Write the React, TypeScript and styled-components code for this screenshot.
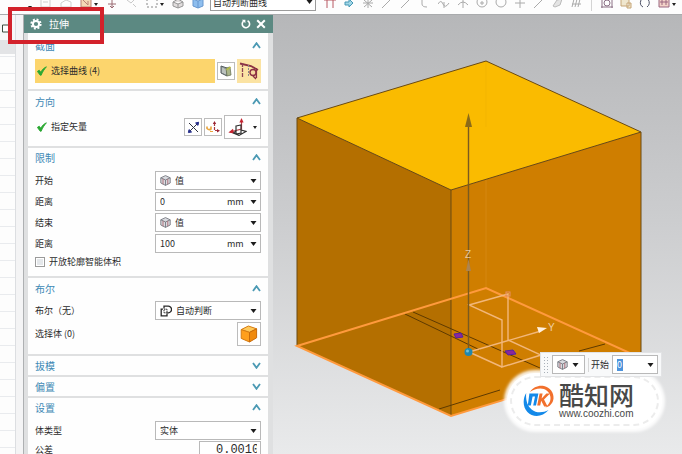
import React, { useState } from "react";
import styled, { createGlobalStyle } from "styled-components";

const GlobalStyle = createGlobalStyle`
  *, *::before, *::after { box-sizing: border-box; }
  body {
    margin: 0;
    font-family: "Noto Sans CJK SC", "Noto Sans", sans-serif;
    font-size: 9px;
    line-height: 14px;
    color: #2b2b2b;
    background: #fff;
  }
  button, input, select { font: inherit; color: inherit; }
`;

const Window = styled.div`
  position: relative;
  display: flex;
  flex-direction: column;
  height: 100vh;
  overflow: hidden;
`;

/* ---------- toolbar ---------- */

const Toolbar = styled.header`
  display: flex;
  align-items: flex-end;
  height: 15px;
  flex: none;
  padding: 0 4px 3px 28px;
  background: #fdfdfd;
  border-bottom: 1px solid #a9abad;
`;

const ToolStrip = styled.div<{ $gap: number }>`
  display: flex;
  align-items: flex-end;
  gap: ${(p) => p.$gap}px;
  height: 100%;
  padding-bottom: 2px;
`;

const ToolButton = styled.button`
  display: flex;
  align-items: center;
  gap: 2px;
  padding: 0;
  border: 0;
  background: none;
  svg { display: block; }
`;

const RuleBox = styled.div`
  display: flex;
  align-items: flex-end;
  width: 106px;
  height: 17px;
  margin: 0 8px 0 6px;
  padding: 0 2px;
  border: 1px solid #9b9b9b;
  flex: none;
  background: #fff;
`;

const Divider = styled.span`
  width: 1px;
  height: 12px;
  margin: 0 9px 0 8px;
  background: #d4d4d4;
`;

/* ---------- body ---------- */

const Body = styled.main`
  display: flex;
  flex: 1;
  min-height: 0;
`;

const Navigator = styled.aside`
  display: flex;
  flex: none;
  width: 24px;
  background: #fff;
  border-right: 1px solid #aeb0b2;
`;

const NavColumn = styled.div`
  flex: 1;
  background-color: #fdfdfd;
  background-image: repeating-linear-gradient(#fdfdfd 0 16px, #e9ebee 16px 17px);
  background-position: 0 8px;
  border-right: 1px solid #dcdee1;
`;

const NavTop = styled.div`
  height: 25px;
  padding: 8px 0 0 2px;
  background: #f7f7f7;
`;

const NavHead = styled.div`
  height: 14px;
  background: #e3e4e6;
`;

const NavEdge = styled.div`
  width: 7px;
  background: #f4f4f5;
`;

const Panel = styled.form`
  display: flex;
  flex-direction: column;
  flex: none;
  width: 249px;
  overflow: hidden;
  background: #dfe0e1;
`;

const PanelHeader = styled.div`
  display: flex;
  align-items: center;
  flex: none;
  height: 18px;
  padding: 0 7px 0 6px;
  gap: 5px;
  background: #5c8982;
  color: #fff;
`;

const PanelTitle = styled.h1`
  flex: 1;
  margin: 0 0 0 2px;
  font-size: 10px;
  font-weight: 400;
`;

const Groups = styled.div`
  display: flex;
  flex-direction: column;
  gap: 2px;
  padding: 0 5px 0 4px;
`;

const GroupBox = styled.section<{ $height: number; $top: number }>`
  min-height: ${(p) => p.$height}px;
  flex: none;
  padding: ${(p) => p.$top}px 7px 0;
  background: #fefefe;
`;

const GroupHeader = styled.button`
  display: flex;
  align-items: center;
  justify-content: space-between;
  width: 100%;
  height: 19px;
  margin: 0;
  padding: 0;
  border: 0;
  background: none;
  color: #4089b5;
  font-size: 10px;
  text-align: left;
`;

const Row = styled.div<{ $height?: number; $top?: number }>`
  display: flex;
  align-items: center;
  gap: 2px;
  height: ${(p) => p.$height ?? 21}px;
  margin-top: ${(p) => p.$top ?? 0}px;
`;

const RowLabel = styled.label`
  flex: 1;
  white-space: pre;
`;

const Step = styled.span<{ $active?: boolean }>`
  display: flex;
  align-items: center;
  flex: 1;
  gap: 4px;
  height: 24px;
  padding-left: 2px;
  background: ${(p) => (p.$active ? "#fcd56d" : "transparent")};
`;

const IconButton = styled.button<{ $w: number; $h: number; $active?: boolean }>`
  display: flex;
  align-items: center;
  justify-content: center;
  gap: 6px;
  width: ${(p) => p.$w}px;
  height: ${(p) => p.$h}px;
  padding: 0;
  border: 1px solid ${(p) => (p.$active ? "#fbe3a3" : "#bcbcbc")};
  background: ${(p) => (p.$active ? "#fbe3a3" : "#fff")};
`;

const Field = styled.div<{ $w?: number }>`
  display: flex;
  align-items: center;
  gap: 4px;
  width: ${(p) => p.$w ?? 106}px;
  height: 19px;
  padding: 0 3px 0 4px;
  border: 1px solid #b9b9b9;
  background: #fff;
  overflow: hidden;
`;

const Choice = styled.select`
  flex: 1;
  min-width: 0;
  height: 14px;
  padding: 0;
  border: 0;
  outline: 0;
  appearance: none;
  background: none;
`;

const TextBox = styled.input`
  flex: 1;
  min-width: 0;
  width: 100%;
  height: 16px;
  padding: 0;
  border: 0;
  outline: 0;
  background: none;
`;

const ToleranceBox = styled(TextBox)`
  padding-left: 12px;
  font-family: "Liberation Mono", monospace;
  font-size: 12px;
`;

const QuickValue = styled.input`
  flex: none;
  width: 6px;
  height: 12px;
  margin-right: auto;
  padding: 0;
  border: 0;
  outline: 0;
  background: #4d93dc;
  color: #fff;
`;

const Unit = styled.span`
  width: 19px;
`;

const MenuButton = styled.button`
  display: flex;
  padding: 0;
  border: 0;
  background: none;
`;

const Check = styled.input`
  width: 10px;
  height: 10px;
  margin: 0 2px 0 0;
  appearance: none;
  border: 1px solid #9a9a9a;
  background: #e4e7ea;
  box-shadow: inset 0 0 0 1px #fff;
  &:checked { background: #4089b5; }
`;

/* ---------- viewport ---------- */

const Viewport = styled.section`
  position: relative;
  flex: 1;
  min-width: 0;
  background: linear-gradient(#b6b7b9, #cbccce 45%, #e9eaeb);
`;

const Model = styled.svg`
  display: block;
  width: 100%;
  height: 100%;
`;

const FloatBar = styled.div`
  position: absolute;
  right: 20px;
  bottom: 77px;
  display: flex;
  align-items: center;
  gap: 3px;
  width: 122px;
  height: 25px;
  padding: 0 3px 0 2px;
  background: #f8f9fa;
  border: 1px solid #e2e3e5;
`;

const Grip = styled.span`
  width: 6px;
  height: 17px;
  background-image: radial-gradient(#a9b0b8 1px, transparent 1px);
  background-size: 3px 3px;
`;

const FloatLabel = styled.label`
  padding-left: 2px;
  border-left: 1px solid #d7d7d7;
  white-space: nowrap;
`;

const Watermark = styled.div`
  position: absolute;
  right: 20px;
  bottom: 25px;
  display: flex;
  align-items: center;
  gap: 4px;
  width: 155px;
  height: 56px;
  padding: 0 0 2px 15px;
  border-radius: 28px;
  background: #fff;
  box-shadow: 0 0 3px 3px rgba(255, 255, 255, 0.9);
  &::before {
    content: "";
    position: absolute;
    inset: 3px;
    border: 2px dashed #ececec;
    border-radius: 26px;
  }
`;

const Brand = styled.div`
  display: flex;
  flex-direction: column;
  color: #484848;
`;

const BrandName = styled.strong`
  font-size: 25px;
  line-height: 27px;
  font-weight: 500;
`;

const BrandUrl = styled.span`
  font-family: "Liberation Sans", Arial, sans-serif;
  font-size: 10px;
  line-height: 11px;
`;

const Callout = styled.div`
  position: absolute;
  left: 8px;
  top: 7px;
  width: 96px;
  height: 37px;
  border: 4px solid #d3222b;
  pointer-events: none;
`;

/* ---------- icons ---------- */

const Caret = () => (
  <svg width="7" height="4" viewBox="0 0 7 4" aria-hidden="true" pointerEvents="none">
    <path d="M0.5 0H6.5L3.5 4Z" fill="#1c1c1c" />
  </svg>
);

const SmallCaret = () => (
  <svg width="4" height="3" viewBox="0 0 4 3" aria-hidden="true">
    <path d="M0 0H4L2 3Z" fill="#222" />
  </svg>
);

const Chevron = ({ open }: { open: boolean }) => (
  <svg width="9" height="7" viewBox="0 0 9 7" aria-hidden="true">
    <path
      d={open ? "M1 6L4.5 1.2L8 6" : "M1 1L4.5 5.8L8 1"}
      fill="none"
      stroke="#4c9ab4"
      strokeWidth="1.8"
    />
  </svg>
);

const Tick = () => (
  <svg width="10" height="10" viewBox="0 0 10 10" aria-hidden="true">
    <path
      d="M0.4 5.4L2.2 4.2L3.8 6.2C5 3.8 7 1.8 9.4 0.8C7.2 3.4 5.4 6 4.2 9.2H3.2Z"
      fill="#2aa832"
      stroke="#2aa832"
      strokeWidth="0.9"
    />
  </svg>
);

const Gear = () => (
  <svg width="12" height="12" viewBox="0 0 12 12" aria-hidden="true">
    <circle cx="6" cy="6" r="4.6" fill="none" stroke="#fff" strokeWidth="2" strokeDasharray="1.9 1.71" />
    <circle cx="6" cy="6" r="3.1" fill="none" stroke="#fff" strokeWidth="2" />
  </svg>
);

const ResetIcon = () => (
  <svg width="10" height="10" viewBox="0 0 10 10" aria-hidden="true">
    <path d="M6.6 1.7A3.7 3.7 0 1 1 2.6 2.1" fill="none" stroke="#fff" strokeWidth="1.6" />
    <path d="M0.8 0.8H4.4V4.2Z" fill="#fff" />
  </svg>
);

const CloseIcon = () => (
  <svg width="10" height="10" viewBox="0 0 10 10" aria-hidden="true">
    <path d="M1.2 1.2L8.8 8.8M8.8 1.2L1.2 8.8" stroke="#fff" strokeWidth="2" />
  </svg>
);

const ValueIcon = () => (
  <svg width="11" height="11" viewBox="0 0 11 11" aria-hidden="true">
    <path d="M5.5 0.6L10.2 2.8V8L5.5 10.4L0.8 8V2.8Z" fill="#d9dbe0" stroke="#777981" strokeWidth="0.9" />
    <path d="M0.8 2.8L5.5 5L10.2 2.8M5.5 5V10.4" fill="none" stroke="#777981" strokeWidth="0.9" />
    <path d="M3 3.9V9.2M7.8 3.9V9.2" stroke="#ad6670" strokeWidth="0.9" />
  </svg>
);

const SketchIcon = () => (
  <svg width="12" height="12" viewBox="0 0 12 12" aria-hidden="true">
    <path d="M1 1V8L7 11V3Z" fill="#9aa3a3" stroke="#545d5f" />
    <path d="M3 3V8M5 4V9" stroke="#edf0e8" strokeWidth="0.8" />
    <path d="M6 3L10 2L11 10L7 11Z" fill="#aab58a" stroke="#6d7659" strokeWidth="0.8" />
    <path d="M6.5 5L10.5 2" stroke="#b9bf3b" strokeWidth="1.5" />
  </svg>
);

const CurveIcon = () => (
  <svg width="20" height="20" viewBox="0 0 20 20" aria-hidden="true">
    <path d="M1 2.5L12 5L19 9" fill="none" stroke="#8c3044" strokeWidth="1.8" />
    <path d="M3.5 2V16" stroke="#8c4454" strokeWidth="1.3" strokeDasharray="4 1" />
    <path d="M9.5 4V16" stroke="#888" strokeDasharray="2 1" />
    <circle cx="14" cy="11.5" r="3" fill="#f5d6a0" stroke="#8c3044" strokeWidth="1.4" />
    <path d="M17.4 7V17M14 15L17 18" stroke="#8c3044" strokeWidth="1.4" />
  </svg>
);

const ReverseIcon = () => (
  <svg width="13" height="13" viewBox="0 0 13 13" aria-hidden="true">
    <path d="M2 2L11 11M2 11L11 2" stroke="#30343f" strokeWidth="1" />
    <path d="M8.6 2L11.6 1.2L11 4.4ZM1.4 11.6L2 8.6L4.6 11Z" fill="#28308c" stroke="#28308c" />
  </svg>
);

const VectorDialogIcon = () => (
  <svg width="14" height="13" viewBox="0 0 14 13" aria-hidden="true">
    <path d="M8.5 2V9.5H12" fill="none" stroke="#a83b42" strokeWidth="1.2" strokeDasharray="3 1" />
    <path d="M6.8 3L8.5 0L10.2 3ZM11 8L14 9.7L11 11.4Z" fill="#9c2533" />
    <path d="M1 5.5V7.5Q3 9.5 5 8V5.5" fill="none" stroke="#e9a43b" strokeWidth="1.6" />
    <path d="M4 10.5H7" stroke="#e9a43b" />
  </svg>
);

const VectorIcon = () => (
  <svg width="19" height="18" viewBox="0 0 19 18" aria-hidden="true">
    <path d="M13.5 3V11L2 14" fill="none" stroke="#b33d46" strokeWidth="1.2" />
    <path d="M11.4 4.6L13.5 0L15.6 4.6Z" fill="#c52330" />
    <path d="M5 10.8L0.4 14.6L6 15.4Z" fill="#c52330" />
    <path d="M8 8L13 7V15L8 16ZM8 13L5.5 15L11 17.4L18 13.4L13 12" fill="none" stroke="#303030" strokeWidth="1.2" />
  </svg>
);

const BoolIcon = () => (
  <svg width="12" height="12" viewBox="0 0 12 12" aria-hidden="true">
    <path d="M4 3.6V1.2H8A3.2 3.2 0 0 1 8.4 7.8H7" fill="none" stroke="#282828" strokeWidth="1.3" />
    <path d="M3 4.2H1.2V10.8H7V8.4" fill="none" stroke="#282828" strokeWidth="1.3" />
    <path d="M4 4.2H7V7.8H4Z" fill="none" stroke="#282828" strokeDasharray="1.5 0.7" />
  </svg>
);

const BodyIcon = () => (
  <svg width="18" height="18" viewBox="0 0 18 18" aria-hidden="true">
    <path d="M8.4 1L16.6 3.8L9.5 7.4L1.2 4.6Z" fill="#ffc95a" stroke="#d57b12" />
    <path d="M1.2 4.6L9.5 7.4V17L1.2 13.4Z" fill="#ff9f1c" stroke="#d57b12" />
    <path d="M9.5 7.4L16.6 3.8V12.8L9.5 17Z" fill="#f08a0e" stroke="#c96b0a" />
  </svg>
);

type GlyphProps = { d: string; w?: number; h?: number; color?: string; fill?: string };

const Glyph = ({ d, w = 12, h = 10, color = "#aaaaaa", fill = "none" }: GlyphProps) => (
  <svg width={w} height={h} viewBox={`0 0 ${w} ${h}`} aria-hidden="true">
    <path d={d} fill={fill} stroke={color} />
  </svg>
);

const BrandLogo = () => (
  <svg width="33" height="33" viewBox="0 0 33 33" aria-hidden="true">
    <path d="M8 8C11 3 17 0.8 22 2C28 3.5 32 8.5 31.5 14.5C31 19.5 27.5 22.8 23.5 23.4C27 20.5 29 17 28.4 12.8C27.6 7.5 23.4 4.4 18.4 4.4C14.4 4.4 11 5.6 8 8Z" fill="#f2702c" />
    <path d="M4.2 9C0.5 15 0.8 23 5.4 28C11 33.8 20.6 33.2 26.6 26C21 28.8 14.5 29.4 9.6 25.4C5 21.6 3.6 15.5 4.2 9Z" fill="#1389e9" />
    <path d="M7.4 9.6H16.4L14 21.6H11.2L13 12.4H10.6L8.8 21.6H5.8Z" fill="#1389e9" />
    <path d="M17.6 9.6H20.6L19.6 14.6L24.4 9.6H28L22 15.4L25.6 22.4H22.2L19.2 16.8L18.2 21.6H15.2Z" fill="#f2702c" />
  </svg>
);

/* ---------- pieces ---------- */

type GroupProps = {
  title: string;
  height: number;
  top?: number;
  initial?: boolean;
  children?: React.ReactNode;
};

function Group({ title, height, top = 0, initial = true, children }: GroupProps) {
  const [open, setOpen] = useState(initial);
  return (
    <GroupBox $height={open ? height : 19} $top={top}>
      <GroupHeader type="button" aria-expanded={open} onClick={() => setOpen(!open)}>
        {title}
        <Chevron open={open} />
      </GroupHeader>
      {open && children}
    </GroupBox>
  );
}

type PickProps = { id: string; icon?: React.ReactNode; options: string[] };

const Pick = ({ id, icon, options }: PickProps) => (
  <Field>
    {icon}
    <Choice id={id}>
      {options.map((o) => (
        <option key={o}>{o}</option>
      ))}
    </Choice>
    <Caret />
  </Field>
);

const Measure = ({ id, value }: { id: string; value: string }) => (
  <Field>
    <TextBox id={id} defaultValue={value} />
    <Unit>mm</Unit>
    <MenuButton type="button" aria-label="单位">
      <Caret />
    </MenuButton>
  </Field>
);

const selectTools: GlyphProps[] = [
  { d: "M1 0V8H10V0M3 3H8", color: "#cfcfcf" },
  { d: "M1 8V4L6 1L11 3V8Z", color: "#cfcfcf" },
  { d: "M1 0V8H11V0M3 1L8 6V2", color: "#b98277", fill: "#f4d9b5" },
  { d: "M6 0V9M2 5H10M4 7L6 9L8 7", color: "#9a6a72" },
  { d: "M1 1L5 4L8 1M7 5L10 8", color: "#c9c9c9" },
  { d: "M1 0V2M1 4V6M1 8H3M5 8H7M9 8H11M11 6V4M11 2V0", color: "#888" },
  { d: "M1 3L6 0L11 3V7L6 9L1 7ZM1 3L6 5L11 3M6 5V9", color: "#969696", fill: "#e1dddd" },
  { d: "M1 0L6 2L11 0V7L6 9L1 7ZM6 2V9", color: "#6797cf", fill: "#8ebeee" },
];

const curveTools: GlyphProps[] = [
  { d: "M0 1H12M3 1V9M9 1V9", color: "#b85863" },
  { d: "M2 3H6V0L10 4L6 8V6H2Z", color: "#4497b5", fill: "#a2d6e6" },
  { d: "M6 0V9M1 4H11M2 1L10 8M10 1L2 8", color: "#aaa" },
  { d: "M1 9L10 0" },
  { d: "M1 9L10 0" },
  { d: "M3 0V5Q3 8 8 8" },
  { d: "M0 5Q3 0 5 5T11 4M6 3V9" },
  { d: "M6 0V9M1 6Q6 0 11 6" },
  { d: "M1 3A5 5 0 0 0 11 3A5 5 0 0 0 1 3M5 3H7V5H5Z" },
  { d: "M1 3A5 5 0 0 0 11 3A5 5 0 0 0 1 3" },
  { d: "M6 0V9M1 4H11" },
  { d: "M1 9L10 0" },
  { d: "M1 7L5 1L10 0L8 6L3 8Z", fill: "#e4e4e4", color: "#bbb" },
  { d: "M1 8L3 0M4 8L6 0M7 8L9 0M1 5H10", color: "#aaa" },
];

const viewTools: GlyphProps[] = [
  { d: "M1 0V9M11 0V9M0 8H12M3 4A3 3 0 0 0 9 4A3 3 0 0 0 3 4", color: "#8b7085" },
  { d: "M1 0V7H9V0M7 4H11V9H7Z", color: "#c6a577", fill: "#efe6ce" },
  { d: "M2 1Q0 6 4 8M8 8Q12 5 9 0", color: "#4d5166" },
  { d: "M1 0V8H11V0M4 1V6M8 1V6M2 3H10", color: "#9b6680", fill: "#f3d3c8" },
];

const SolidModel = () => (
  <Model viewBox="273 15 409 439" preserveAspectRatio="xMidYMid meet" role="img" aria-label="拉伸预览">
    <path d="M297 118L486 61L641 132L451 190Z" fill="#fabb00" />
    <path d="M297 118L451 190V416L297 346Z" fill="#b46f00" />
    <path d="M451 190L641 132V358L451 416Z" fill="#cf7e00" />
    <path d="M486 61V127" stroke="#f3b500" />
    <path d="M486 179V288" stroke="#d58710" />
    <g fill="none" stroke="#6a4a12">
      <path d="M297 118L486 61L641 132L451 190Z" />
      <path d="M297 118V346M451 190V416M641 132V358" />
      <path d="M405 314L480 350M413 312L540 368M439 409L500 390M579 351L605 344" stroke="#5e3a00" />
    </g>
    <path d="M297 346L486 288L641 358L451 416Z" fill="none" stroke="#ff9a3d" strokeWidth="2" />
    <g fill="none" stroke="#f2b77a" strokeWidth="1.4">
      <path d="M469 305L508 294V340L541 355L502 367V320Z" />
      <path d="M469 352L541 331M469 352L502 367" />
    </g>
    <rect x="506" y="292" width="4" height="4" fill="none" stroke="#ea9067" />
    <path d="M468.5 352V124" stroke="#7a5a20" strokeWidth="1.4" />
    <path d="M465 127L468.5 113L472 127Z" fill="#8b6b18" />
    <path d="M466 271L468.5 259L471 271Z" fill="#ad8450" />
    <path d="M537 327L547 328L539 333Z" fill="#fff0df" />
    <path d="M454 334L461 333L463 337L456 338ZM505 351L513 350L516 354L508 355Z" fill="#8b279b" stroke="#5421a6" />
    <circle cx="468.5" cy="352" r="4" fill="#2187ad" />
    <circle cx="467.5" cy="351" r="1.5" fill="#6ec1d9" />
    <text x="465" y="258" fontSize="10" fill="#e8c8a0" fontFamily="Liberation Sans, sans-serif">Z</text>
    <text x="548" y="331" fontSize="10" fill="#f0cfa5" fontFamily="Liberation Sans, sans-serif">Y</text>
  </Model>
);

export default function App() {
  return (
    <Window>
      <GlobalStyle />
      <Toolbar>
        <ToolStrip $gap={8}>
          <SmallCaret />
          {selectTools.map((t, i) => (
            <ToolButton type="button" key={i} aria-label="选择工具">
              <Glyph {...t} />
              {(i === 2 || i === 5) && <SmallCaret />}
            </ToolButton>
          ))}
        </ToolStrip>
        <RuleBox>
          <Choice aria-label="曲线规则">
            <option>自动判断曲线</option>
          </Choice>
          <svg width="7" height="10" viewBox="0 0 7 10" aria-hidden="true">
            <path d="M0.5 0H6.5L3.5 4Z" fill="#1c1c1c" />
          </svg>
        </RuleBox>
        <ToolStrip $gap={7}>
          {curveTools.map((t, i) => (
            <ToolButton type="button" key={i} aria-label="捕捉工具">
              <Glyph {...t} />
            </ToolButton>
          ))}
        </ToolStrip>
        <Divider />
        <ToolStrip $gap={7}>
          {viewTools.map((t, i) => (
            <ToolButton type="button" key={i} aria-label="视图工具">
              <Glyph {...t} />
              {i === 3 && <SmallCaret />}
            </ToolButton>
          ))}
        </ToolStrip>
      </Toolbar>

      <Body>
        <Navigator>
          <NavColumn>
            <NavTop>
              <svg width="8" height="9" viewBox="0 0 8 9" aria-hidden="true">
                <path d="M0.5 1H7V8H0.5Z" fill="#fff" stroke="#3a4a3c" />
              </svg>
            </NavTop>
            <NavHead />
          </NavColumn>
          <NavEdge />
        </Navigator>

        <Panel onSubmit={(e) => e.preventDefault()}>
          <PanelHeader>
            <Gear />
            <PanelTitle>拉伸</PanelTitle>
            <MenuButton type="button" aria-label="重置"><ResetIcon /></MenuButton>
            <MenuButton type="button" aria-label="关闭"><CloseIcon /></MenuButton>
          </PanelHeader>
          <Groups>
            <Group title="截面" height={56} top={3}>
              <Row $height={24} $top={4}>
                <Step $active><Tick />选择曲线 (4)</Step>
                <IconButton type="button" aria-label="绘制截面" $w={18} $h={18}><SketchIcon /></IconButton>
                <IconButton type="button" aria-label="曲线" $w={24} $h={24} $active><CurveIcon /></IconButton>
              </Row>
            </Group>

            <Group title="方向" height={55} top={1}>
              <Row $height={24} $top={4}>
                <Step><Tick />指定矢量</Step>
                <IconButton type="button" aria-label="反向" $w={18} $h={18}><ReverseIcon /></IconButton>
                <IconButton type="button" aria-label="矢量对话框" $w={18} $h={18}><VectorDialogIcon /></IconButton>
                <IconButton type="button" aria-label="自动判断的矢量" $w={37} $h={24}><VectorIcon /><SmallCaret /></IconButton>
              </Row>
            </Group>

            <Group title="限制" height={128}>
              <Row $top={3}>
                <RowLabel htmlFor="start">开始</RowLabel>
                <Pick id="start" icon={<ValueIcon />} options={["值", "对称值", "贯通"]} />
              </Row>
              <Row>
                <RowLabel htmlFor="startDist">距离</RowLabel>
                <Measure id="startDist" value="0" />
              </Row>
              <Row>
                <RowLabel htmlFor="end">结束</RowLabel>
                <Pick id="end" icon={<ValueIcon />} options={["值", "对称值", "贯通"]} />
              </Row>
              <Row>
                <RowLabel htmlFor="endDist">距离</RowLabel>
                <Measure id="endDist" value="100" />
              </Row>
              <Row $height={16}>
                <Check id="smart" type="checkbox" />
                <RowLabel htmlFor="smart">开放轮廓智能体积</RowLabel>
              </Row>
            </Group>

            <Group title="布尔" height={76} top={1}>
              <Row $top={2}>
                <RowLabel htmlFor="bool">布尔（无）</RowLabel>
                <Pick id="bool" icon={<BoolIcon />} options={["自动判断", "无", "求和"]} />
              </Row>
              <Row $height={26}>
                <RowLabel htmlFor="body">选择体 (0)</RowLabel>
                <IconButton id="body" type="button" $w={24} $h={24}><BodyIcon /></IconButton>
              </Row>
            </Group>

            <Group title="拔模" height={19} initial={false} />
            <Group title="偏置" height={19} initial={false} />

            <Group title="设置" height={60}>
              <Row $top={3}>
                <RowLabel htmlFor="kind">体类型</RowLabel>
                <Pick id="kind" options={["实体", "片体"]} />
              </Row>
              <Row $height={18}>
                <RowLabel htmlFor="tol">公差</RowLabel>
                <Field $w={62}>
                  <ToleranceBox id="tol" defaultValue="0.00100" />
                </Field>
              </Row>
            </Group>
          </Groups>
        </Panel>

        <Viewport>
          <SolidModel />
          <Watermark>
            <BrandLogo />
            <Brand>
              <BrandName>酷知网</BrandName>
              <BrandUrl>www.coozhi.com</BrandUrl>
            </Brand>
          </Watermark>
          <FloatBar>
            <Grip />
            <Field $w={34}>
              <ValueIcon />
              <MenuButton type="button" aria-label="限制类型"><Caret /></MenuButton>
            </Field>
            <FloatLabel htmlFor="quick">开始</FloatLabel>
            <Field $w={47}>
              <QuickValue id="quick" defaultValue="0" />
              <MenuButton type="button" aria-label="选项"><Caret /></MenuButton>
            </Field>
          </FloatBar>
        </Viewport>
      </Body>
      <Callout />
    </Window>
  );
}
